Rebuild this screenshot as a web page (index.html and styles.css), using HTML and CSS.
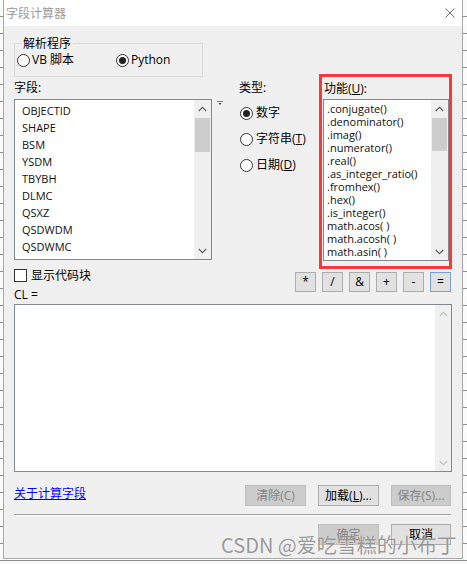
FILE: index.html
```html
<!DOCTYPE html>
<html lang="zh-CN">
<head>
<meta charset="utf-8">
<title>字段计算器</title>
<link rel="stylesheet" href="styles.css">
</head>
<body>
<div class="window">
  <div class="titlebar">
    <span class="title">字段计算器</span>
    <svg class="close" width="10" height="10" viewBox="0 0 10 10"><path d="M0.5 0.5 L9.5 9.5 M9.5 0.5 L0.5 9.5" stroke="#6f6f6f" stroke-width="1" fill="none"/></svg>
  </div>
  <div class="body">
    <div class="main">
      <div class="col-left">
        <fieldset class="parser">
          <legend>解析程序</legend>
          <div class="parser-row">
            <label class="radio radio-vb"><span class="circle"></span><span class="rtext">VB 脚本</span></label>
            <label class="radio"><span class="circle checked"></span><span class="rtext">Python</span></label>
          </div>
        </fieldset>
        <div class="label lbl-fields">字段:</div>
        <div class="fieldrow">
          <div class="listbox fields">
            <ul class="items">
              <li>OBJECTID</li><li>SHAPE</li><li>BSM</li><li>YSDM</li><li>TBYBH</li><li>DLMC</li><li>QSXZ</li><li>QSDWDM</li><li>QSDWMC</li>
            </ul>
            <div class="scrollbar">
              <div class="sb-arrow"><svg width="9" height="6" viewBox="0 0 9 6"><path d="M0.8 5 L4.5 1.3 L8.2 5" stroke="#606060" stroke-width="1.2" fill="none"/></svg></div>
              <div class="sb-track"><div class="sb-thumb thumb-fields"></div></div>
              <div class="sb-arrow"><svg width="9" height="6" viewBox="0 0 9 6"><path d="M0.8 1 L4.5 4.7 L8.2 1" stroke="#606060" stroke-width="1.2" fill="none"/></svg></div>
            </div>
          </div>
          <svg class="sort" width="6" height="5" viewBox="0 0 6 5"><path d="M0 0.5 H6" stroke="#777" stroke-width="1"/><path d="M1.5 2 L4.5 2 L3 4 Z" fill="#444"/></svg>
        </div>
      </div>
      <div class="col-type">
        <div class="label">类型:</div>
        <div class="type-list">
          <label class="radio type-radio"><span class="circle checked"></span><span class="rtext">数字</span></label>
          <label class="radio type-radio"><span class="circle"></span><span class="rtext">字符串(<u>T</u>)</span></label>
          <label class="radio type-radio"><span class="circle"></span><span class="rtext">日期(<u>D</u>)</span></label>
        </div>
      </div>
      <div class="col-func">
        <div class="label lbl-func">功能(<u>U</u>):</div>
        <div class="listbox funcs">
          <ul class="items">
            <li>.conjugate()</li><li>.denominator()</li><li>.imag()</li><li>.numerator()</li><li>.real()</li><li>.as_integer_ratio()</li><li>.fromhex()</li><li>.hex()</li><li>.is_integer()</li><li>math.acos( )</li><li>math.acosh( )</li><li>math.asin( )</li><li>math.asinh( )</li>
          </ul>
          <div class="scrollbar">
            <div class="sb-arrow"><svg width="9" height="6" viewBox="0 0 9 6"><path d="M0.8 5 L4.5 1.3 L8.2 5" stroke="#606060" stroke-width="1.2" fill="none"/></svg></div>
            <div class="sb-track"><div class="sb-thumb thumb-funcs"></div></div>
            <div class="sb-arrow"><svg width="9" height="6" viewBox="0 0 9 6"><path d="M0.8 1 L4.5 4.7 L8.2 1" stroke="#606060" stroke-width="1.2" fill="none"/></svg></div>
          </div>
        </div>
      </div>
    </div>

    <div class="row-code">
      <div class="code-left">
        <label class="check"><span class="box"></span><span>显示代码块</span></label>
        <div class="label cl">CL =</div>
      </div>
      <div class="ops">
        <button class="btn op">*</button>
        <button class="btn op">/</button>
        <button class="btn op">&amp;</button>
        <button class="btn op">+</button>
        <button class="btn op">-</button>
        <button class="btn op focus">=</button>
      </div>
    </div>

    <div class="codearea">
      <div class="code-text"></div>
      <div class="scrollbar sb-disabled">
        <div class="sb-arrow"><svg width="9" height="6" viewBox="0 0 9 6"><path d="M0.8 5 L4.5 1.3 L8.2 5" stroke="#c2c2c2" stroke-width="1.2" fill="none"/></svg></div>
        <div class="sb-track"></div>
        <div class="sb-arrow"><svg width="9" height="6" viewBox="0 0 9 6"><path d="M0.8 1 L4.5 4.7 L8.2 1" stroke="#c2c2c2" stroke-width="1.2" fill="none"/></svg></div>
      </div>
    </div>

    <div class="row-actions">
      <a class="link" href="#">关于计算字段</a>
      <button class="btn wide disabled">清除(C)</button>
      <button class="btn wide">加载(<u>L</u>)...</button>
      <button class="btn wide last disabled">保存(S)...</button>
    </div>

    <div class="sep"></div>

    <div class="row-ok">
      <button class="btn wide disabled">确定</button>
      <button class="btn wide last">取消</button>
    </div>
  </div>
  <div class="watermark">CSDN @爱吃雪糕的小布丁</div>
</div>
</body>
</html>
```

FILE: styles.css
```css
html, body {
  margin: 0;
  padding: 0;
  width: 467px;
  height: 564px;
  overflow: hidden;
}

body {
  background: repeating-linear-gradient(to bottom, #fbfbfb 0 16px, #8d8d8d 16px 17px);
  font-family: "Open Sans", "Noto Sans CJK SC", sans-serif;
  font-size: 12px;
  color: #000;
}

.window {
  position: relative;
  margin-left: 3px;
  width: 460px;
  height: 559px;
  box-sizing: border-box;
  border: 1px solid #a9a9a9;
  border-top: 0;
  background: #f0f0f0;
}

.titlebar {
  height: 26px;
  background: #fff;
  display: flex;
  align-items: center;
  justify-content: space-between;
  padding: 0 7px 0 2px;
}

.title {
  font-family: "Noto Sans CJK SC", sans-serif;
  font-size: 12px;
  line-height: 16px;
  color: #9a9a9a;
}

.close {
  display: block;
}

.body {
  padding: 9px 10px 0 10px;
}

.main {
  display: flex;
  align-items: flex-start;
}

.label {
  font-size: 12px;
  line-height: 16px;
  font-family: "Open Sans", "Noto Sans CJK SC", sans-serif;
}

/* left column */
.col-left {
  width: 209px;
  display: flex;
  flex-direction: column;
}

.parser {
  margin: 0;
  width: 189px;
  box-sizing: border-box;
  border: 1px solid #d9d9d9;
  padding: 1px 2px 8px 2px;
  min-width: 0;
}

.parser legend {
  padding: 0 2px;
  margin-left: 4px;
  font-family: "Noto Sans CJK SC", sans-serif;
  font-size: 12px;
  line-height: 16px;
}

.parser-row {
  display: flex;
  align-items: center;
  height: 16px;
}

.radio {
  display: flex;
  align-items: center;
  gap: 2px;
}

.radio-vb {
  width: 99px;
}

.rtext {
  font-size: 12px;
  line-height: 16px;
}

.circle {
  width: 13px;
  height: 13px;
  box-sizing: border-box;
  border: 1px solid #333;
  border-radius: 50%;
  background: #fff;
  display: flex;
  align-items: center;
  justify-content: center;
  flex: none;
}

.circle.checked::after {
  content: "";
  width: 7px;
  height: 7px;
  border-radius: 50%;
  background: #222;
}

.lbl-fields {
  margin-top: 3px;
}

.fieldrow {
  display: flex;
  align-items: flex-start;
  margin-top: 3px;
}

.sort {
  margin-left: 5px;
  margin-top: 2px;
  display: block;
}

.listbox {
  box-sizing: border-box;
  border: 1px solid #828790;
  background: #fff;
  display: flex;
}

.items {
  flex: 1;
  list-style: none;
  margin: 0;
  overflow: hidden;
  font-family: "Open Sans", sans-serif;
  font-size: 11px;
  color: #111;
  white-space: nowrap;
}

.fields {
  width: 199px;
  height: 161px;
}

.fields .items {
  padding: 2px 0 0 7px;
}

.fields .items li {
  line-height: 17px;
  height: 17px;
}

.scrollbar {
  width: 17px;
  flex: none;
  background: #f0f0f0;
  display: flex;
  flex-direction: column;
}

.sb-arrow {
  height: 17px;
  flex: none;
  display: flex;
  align-items: center;
  justify-content: center;
}

.sb-arrow svg {
  display: block;
}

.sb-track {
  flex: 1;
}

.sb-thumb {
  margin: 1px 1px 0 1px;
  background: #cdcdcd;
}

.thumb-fields {
  height: 34px;
}

.thumb-funcs {
  height: 33px;
}

/* type column */
.col-type {
  width: 80px;
  margin-left: 16px;
  margin-top: 45px;
}

.type-list {
  margin-top: 4px;
}

.type-radio {
  height: 26px;
  padding-left: 1px;
  gap: 3px;
}

/* functions column */
.col-func {
  width: 133px;
  height: 195px;
  margin-top: 39px;
  box-sizing: border-box;
  border: 3px solid #f23b3b;
  padding: 4px 0 5px 1px;
}

.lbl-func {
  padding-left: 1px;
}

.funcs {
  width: 126px;
  height: 162px;
  margin-top: 2px;
}

.funcs .items {
  padding: 2px 0 0 3px;
}

.funcs .items li {
  line-height: 13px;
  height: 13px;
}

/* code row */
.row-code {
  display: flex;
  justify-content: space-between;
  align-items: flex-start;
  margin-top: -1px;
}

.check {
  display: flex;
  align-items: center;
  gap: 4px;
  height: 14px;
  font-family: "Noto Sans CJK SC", sans-serif;
  font-size: 12px;
  line-height: 14px;
}

.box {
  width: 13px;
  height: 13px;
  box-sizing: border-box;
  border: 1px solid #333;
  background: #fff;
}

.cl {
  margin-top: 5px;
}

.ops {
  display: flex;
  gap: 6px;
  margin-top: 4px;
  margin-right: 1px;
}

.btn {
  box-sizing: border-box;
  border: 1px solid #adadad;
  background: #e1e1e1;
  color: #000;
  font-family: "Open Sans", "Noto Sans CJK SC", sans-serif;
  font-size: 12px;
  padding: 0;
  margin: 0;
  display: flex;
  align-items: center;
  justify-content: center;
  line-height: 16px;
}

.op {
  width: 21px;
  height: 20px;
}

.op.focus {
  border-color: #7b9fc9;
}

.btn.disabled {
  background: #cccccc;
  border-color: #bfbfbf;
  color: #838383;
}

/* code area */
.codearea {
  margin-top: 1px;
  width: 438px;
  height: 168px;
  box-sizing: border-box;
  border: 1px solid #828790;
  background: #fff;
  display: flex;
}

.code-text {
  flex: 1;
}

.sb-disabled {
  width: 16px;
}

/* actions */
.row-actions {
  display: flex;
  align-items: flex-start;
  margin-top: 13px;
}

.link {
  flex: 1;
  color: #0000ff;
  text-decoration: underline;
  font-family: "Noto Sans CJK SC", sans-serif;
  font-size: 12px;
  line-height: 16px;
}

.wide {
  width: 61px;
  height: 21px;
  margin-right: 12px;
}

.wide.last {
  width: 60px;
  margin-right: 1px;
}

.sep {
  margin-top: 8px;
  width: 437px;
  border-top: 1px solid #a0a0a0;
  border-bottom: 1px solid #ffffff;
}

.row-ok {
  display: flex;
  justify-content: flex-end;
  margin-top: 8px;
}

.watermark {
  position: absolute;
  left: 217px;
  top: 532px;
  font-family: "Noto Sans CJK SC", sans-serif;
  font-size: 20px;
  line-height: 26px;
  color: rgba(120, 120, 120, 0.75);
  text-shadow: 0 0 1px rgba(255, 255, 255, 0.8);
  white-space: nowrap;
}
```
